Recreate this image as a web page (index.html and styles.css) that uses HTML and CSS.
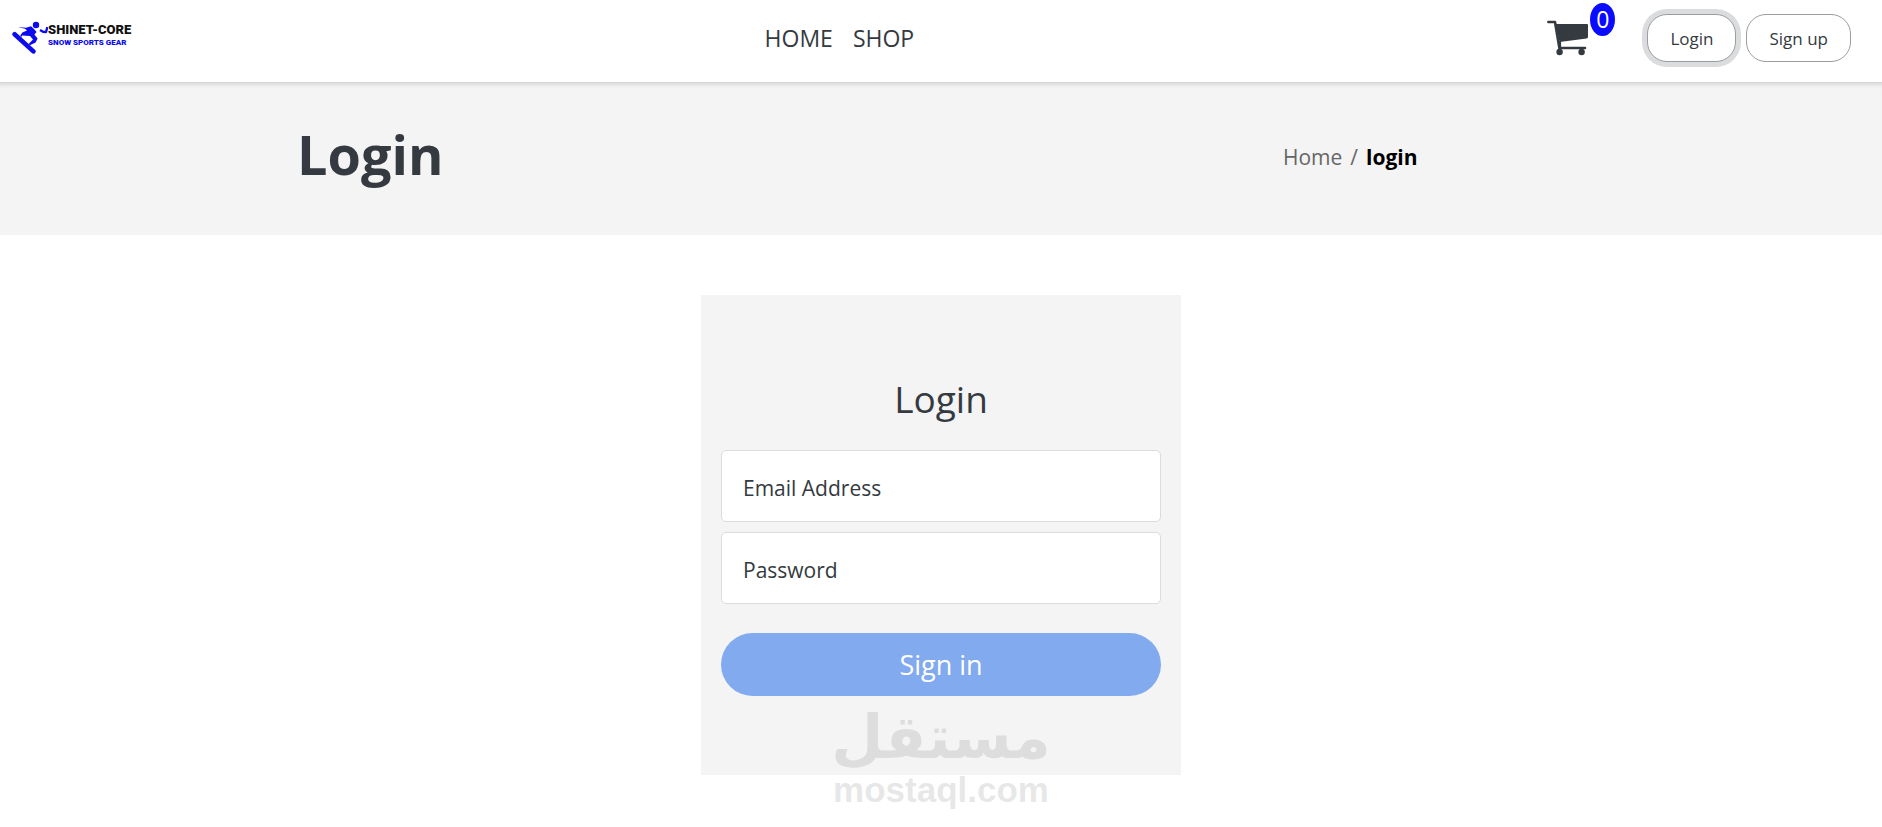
FILE: index.html
```html
<!DOCTYPE html>
<html lang="en">
<head>
    <meta charset="UTF-8">
    <meta name="viewport" content="width=device-width, initial-scale=1.0">
    <title>Shinet-Core | Login</title>
    <link rel="stylesheet" href="styles.css">
</head>
<body>

    <header class="navbar">
        <a href="#" class="brand">
            <svg class="brand-icon" viewBox="0 0 36 34" width="36" height="34" aria-hidden="true">
                <path d="M2.6 13.2 L21.4 30.4" stroke="#0b0bee" stroke-width="4.6" stroke-linecap="round"/>
                <circle cx="24" cy="4" r="3.2" fill="#0b0bee"/>
                <path d="M6 6 L14 6.8 L19 5.2 L22 8 L24.6 11 L22.4 13.6 L25.6 17.4 L23.6 21.4 L18.4 24 L16 23.4 L21 18.6 L18 15 L10 14.4 L9 17 L8.4 14.2 L10.4 11.6 L15 9.4 L13 7.8 Z" fill="#0b0bee"/>
                <path d="M28 9 L31 10.8 L34 11 L35.4 6" fill="none" stroke="#0b0bee" stroke-width="2.4" stroke-linejoin="round"/>
            </svg>
            <span class="brand-text">
                <span class="brand-name">SHINET-CORE</span>
                <span class="brand-tag">SNOW SPORTS GEAR</span>
            </span>
        </a>

        <nav class="nav-links">
            <a href="#">HOME</a>
            <a href="#">SHOP</a>
        </nav>

        <div class="nav-actions">
            <a href="#" class="cart" aria-label="Cart">
                <svg viewBox="0 0 42 36" width="42" height="36" aria-hidden="true">
                    <path d="M1.4 2 H8 L12.4 28 H38" fill="none" stroke="#343a40" stroke-width="2.6" stroke-linecap="round" stroke-linejoin="round"/>
                    <path d="M8.6 4 H40 Q41 4 41 5 V17 Q41 18.4 39.6 18.6 L12.6 22 Z" fill="#343a40"/>
                    <path d="M12.6 21 V27" stroke="#343a40" stroke-width="3"/>
                    <circle cx="12.6" cy="32" r="3.2" fill="#343a40"/>
                    <circle cx="34.6" cy="32" r="3.2" fill="#343a40"/>
                    <path d="M12.6 28 V32 M34.6 28 V32" stroke="#343a40" stroke-width="2"/>
                </svg>
                <span class="cart-count">0</span>
            </a>
            <button type="button" class="nav-button active">Login</button>
            <button type="button" class="nav-button">Sign up</button>
        </div>
    </header>

    <section class="banner">
        <div class="banner-inner">
            <h1>Login</h1>
            <div class="breadcrumb">
                <a href="#">Home</a>
                <span>/</span>
                <strong>login</strong>
            </div>
        </div>
    </section>

    <main>
        <div class="login-card">
            <form class="login-form">
                <h2>Login</h2>
                <div class="form-field">
                    <input type="email" id="email" name="email" class="form-input" required>
                    <label for="email">Email Address</label>
                </div>
                <div class="form-field">
                    <input type="password" id="password" name="password" class="form-input" required>
                    <label for="password">Password</label>
                </div>
                <button type="submit" class="form-button" disabled>Sign in</button>
            </form>
            <div class="watermark">
                <span class="watermark-ar" lang="ar" dir="rtl">مستقل</span>
                <span class="watermark-en">mostaql.com</span>
            </div>
        </div>
    </main>

</body>
</html>
```
FILE: styles.css
```css
body {
    font-family: 'Segoe UI', 'Open Sans', sans-serif;
    margin: 0;
    color: #343a40;
    background-color: #fff;
}

* {
    box-sizing: border-box;
}

a {
    color: inherit;
    text-decoration: none;
}

/* top bar */
.navbar {
    display: flex;
    justify-content: space-between;
    align-items: center;
    height: 82px;
    padding: 0 31px 6px 12px;
    background-color: #fff;
}

.brand {
    display: flex;
    align-items: center;
}

.brand-text {
    display: flex;
    flex-direction: column;
    padding-bottom: 4px;
    font-family: Roboto, sans-serif;
    font-weight: 900;
}

.brand-name {
    font-size: 13px;
    line-height: 14px;
    color: #111;
}

.brand-tag {
    font-size: 8px;
    line-height: 12px;
    color: #0b0bee;
}

.nav-links {
    display: flex;
    gap: 20px;
    font-size: 23px;
}

.nav-actions {
    display: flex;
    align-items: center;
    gap: 10px;
}

.cart {
    position: relative;
    display: flex;
    margin-right: 48px;
}

.cart-count {
    position: absolute;
    top: -17px;
    right: -26px;
    width: 25px;
    height: 33px;
    border-radius: 50%;
    background-color: #0b0bff;
    color: #fff;
    font-size: 23px;
    line-height: 33px;
    text-align: center;
}

.nav-button {
    height: 48px;
    padding: 0 22px;
    border: 1px solid #9a9da0;
    border-radius: 20px;
    background-color: #fff;
    color: #343a40;
    font-family: inherit;
    font-size: 17px;
    cursor: pointer;
}

.nav-button.active {
    box-shadow: 0 0 0 5px #dadcde;
}

/* page title */
.banner {
    background-color: #f4f4f4;
    box-shadow: inset 0 1px #d6d6d6, inset 0 6px 5px -4px rgba(0, 0, 0, 0.15);
}

.banner-inner {
    display: grid;
    grid-template-columns: 3fr 1fr;
    align-items: center;
    max-width: 1320px;
    height: 153px;
    margin: 0 auto;
    padding-bottom: 4px;
}

.banner h1 {
    margin: 0;
    padding: 0 16px 6px;
    font-size: 54px;
    line-height: 64px;
}

.breadcrumb {
    display: flex;
    gap: 8px;
    padding-left: 12px;
    font-size: 21px;
    color: #666;
}

.breadcrumb strong {
    color: #000;
}

/* login form */
main {
    padding: 60px 20px 52px;
}

.login-card {
    position: relative;
    max-width: 480px;
    margin: 0 auto;
    padding: 79px 20px 59px;
    background-color: #f4f4f4;
}

.login-form {
    display: flex;
    flex-direction: column;
    gap: 10px;
}

.login-form h2 {
    margin: 0;
    padding-bottom: 16px;
    font-size: 37px;
    font-weight: normal;
    line-height: 50px;
    text-align: center;
}

.form-field {
    position: relative;
}

.form-input {
    display: block;
    width: 100%;
    height: 72px;
    padding: 20px 22px;
    border: 1px solid #dcdcdc;
    border-radius: 5px;
    background-color: #fff;
    font-family: inherit;
    font-size: 21px;
}

.form-field label {
    position: absolute;
    top: 23px;
    left: 22px;
    font-size: 21px;
    line-height: 30px;
}

.form-button {
    height: 63px;
    margin: 19px 0 20px;
    border: none;
    border-radius: 32px;
    background-color: #82aaef;
    color: #fff;
    font-family: inherit;
    font-size: 27px;
}

.watermark {
    position: absolute;
    bottom: -33px;
    left: 0;
    right: 0;
    display: flex;
    flex-direction: column;
    align-items: center;
    color: #000;
    font-weight: bold;
    opacity: 0.09;
    pointer-events: none;
}

.watermark-ar {
    font-family: 'DejaVu Sans', sans-serif;
    font-size: 60px;
    line-height: 70px;
}

.watermark-en {
    font-family: 'Liberation Sans', Arial, sans-serif;
    font-size: 35px;
    line-height: 36px;
}
```
